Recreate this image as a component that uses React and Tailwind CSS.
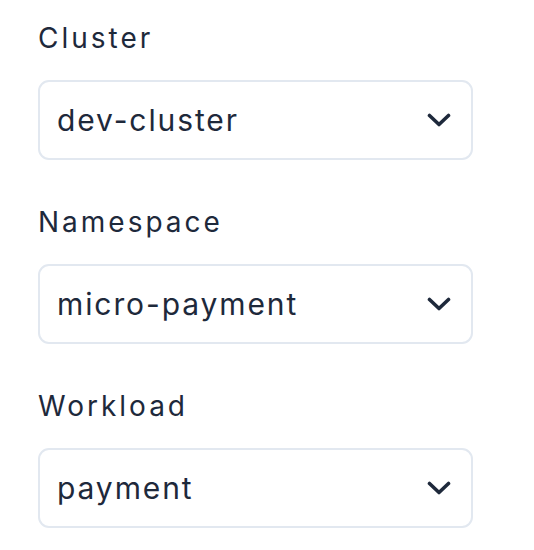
import React from 'react';

const fields = [
  { label: 'Cluster', value: 'dev-cluster' },
  { label: 'Namespace', value: 'micro-payment' },
  { label: 'Workload', value: 'payment' },
];

const Chevron = () => (
  <svg width="24" height="14" viewBox="0 0 24 14" fill="none" className="shrink-0">
    <polyline
      points="2.5,2.5 12,11.5 21.5,2.5"
      stroke="#1e293b"
      strokeWidth="3.6"
      strokeLinecap="round"
      strokeLinejoin="round"
    />
  </svg>
);

const App = () => {
  return (
    <div className="min-h-screen bg-white px-[38px] pt-[22px] font-['Inter','Noto_Sans',sans-serif] text-[#1e293b]">
      <div className="flex w-[435px] flex-col">
        {fields.map((f) => (
          <div key={f.label} className="mb-[46px] flex flex-col">
            <label className="text-[28px] leading-[32px] tracking-[3px]">{f.label}</label>
            <div className="mt-[26px] flex h-[80px] items-center justify-between rounded-[11px] border-2 border-[#e2e8f0] pl-[17px] pr-[20px]">
              <span className="text-[30px] leading-none tracking-[1.9px]">{f.value}</span>
              <Chevron />
            </div>
          </div>
        ))}
      </div>
    </div>
  );
};

export default App;
